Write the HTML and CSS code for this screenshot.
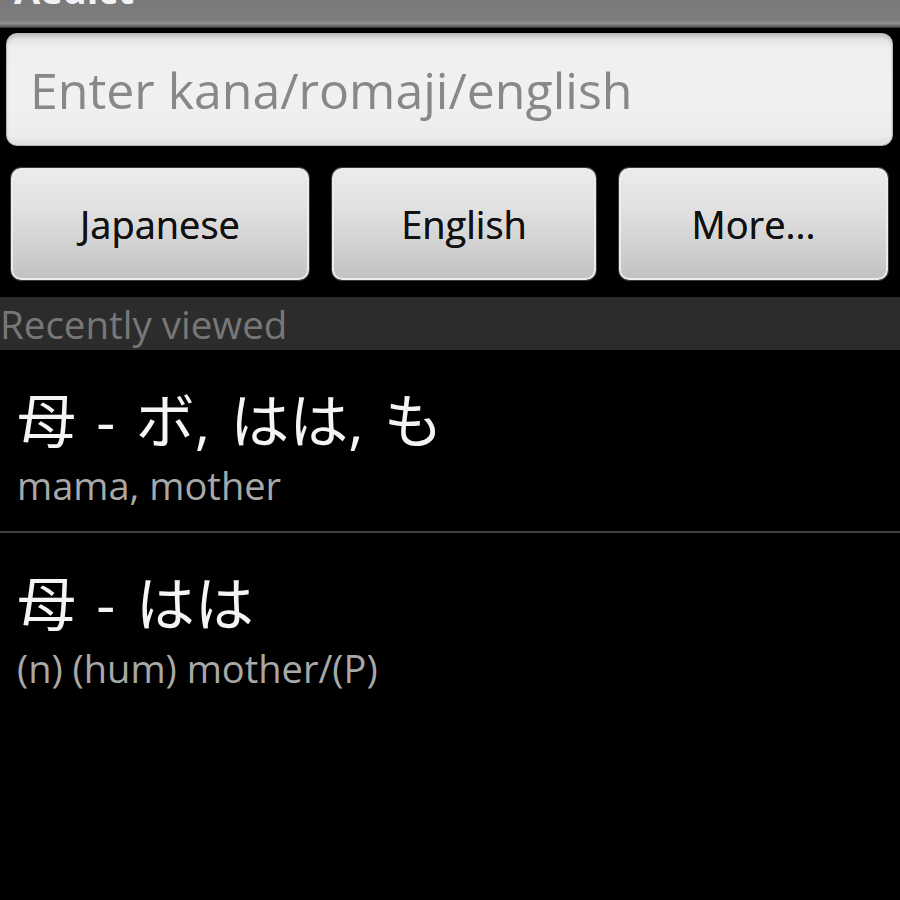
FILE: index.html
```html
<!DOCTYPE html>
<html lang="en">
<head>
<meta charset="utf-8">
<title>Aedict</title>
<link rel="stylesheet" href="styles.css">
</head>
<body>
<div class="screen">
  <header class="titlebar"><span class="title">Aedict</span></header>
  <div class="search-row">
    <input class="search" type="text" placeholder="Enter kana/romaji/english">
  </div>
  <div class="buttons">
    <button class="btn">Japanese</button>
    <button class="btn">English</button>
    <button class="btn">More...</button>
  </div>
  <div class="section">Recently viewed</div>
  <ul class="list">
    <li class="item">
      <div class="item-title">母 - ボ, はは, も</div>
      <div class="item-sub">mama, mother</div>
    </li>
    <li class="item">
      <div class="item-title">母 - はは</div>
      <div class="item-sub">(n) (hum) mother/(P)</div>
    </li>
  </ul>
</div>
</body>
</html>
```

FILE: styles.css
```css
html, body {
  margin: 0;
  padding: 0;
  background: #000;
}

.screen {
  width: 900px;
  height: 900px;
  overflow: hidden;
  background: #000;
  font-family: "Open Sans", "Noto Sans CJK JP", sans-serif;
}

.titlebar {
  height: 28px;
  overflow: hidden;
  background: linear-gradient(#7a7a7a 0%, #7d7d7d 72%, #8d8d8d 84%, #6a6a6a 93%, #2a2a2a 100%);
  padding-left: 14px;
}

.title {
  display: block;
  margin-top: -30px;
  font-size: 38px;
  line-height: 38px;
  font-weight: 700;
  color: #f2f2f2;
}

.search-row {
  padding: 5px 7px 0 6px;
}

.search {
  display: block;
  box-sizing: border-box;
  width: 100%;
  height: 113px;
  margin: 0;
  padding: 0 0 0 23px;
  border: 1px solid #b8b8b8;
  border-radius: 11px;
  background: linear-gradient(#dedede 0%, #efefef 12%, #f1f1f1 60%, #ececec 92%, #dcdcdc 100%);
  box-shadow: inset 0 3px 3px rgba(0, 0, 0, 0.12);
  font-family: "Open Sans", sans-serif;
  font-size: 50px;
  color: #333;
  outline: none;
}

.search::placeholder {
  color: #888;
}

.buttons {
  display: grid;
  grid-template-columns: 298px 264px 269px;
  column-gap: 23px;
  padding: 22px 0 0 11px;
}

.btn {
  box-sizing: border-box;
  height: 112px;
  margin: 0;
  padding: 0;
  border: 2px solid #ececec;
  border-radius: 10px;
  background: linear-gradient(#ececec 0%, #e1e1e1 35%, #cfcfcf 75%, #c2c2c2 100%);
  box-shadow: 0 0 0 1px #3a3a3a;
  font-family: "Open Sans", sans-serif;
  font-size: 38px;
  color: #111;
  text-shadow: 0 0 0.6px #111;
}

.section {
  margin-top: 17px;
  height: 53px;
  box-sizing: border-box;
  padding: 2px 0 0 0;
  background: #2c2c2c;
  font-size: 38.5px;
  line-height: 51px;
  color: #777;
}

.list {
  list-style: none;
  margin: 0;
  padding: 0;
}

.item {
  padding: 38px 0 22px 17px;
  border-bottom: 2px solid #404040;
}

.item:last-child {
  border-bottom: none;
}

.item-title {
  font-family: "Open Sans", "Noto Sans CJK JP", sans-serif;
  font-size: 59px;
  line-height: 64px;
  word-spacing: 5px;
  color: #f4f4f4;
}

.item-sub {
  margin-top: 9px;
  font-size: 38px;
  line-height: 48px;
  color: #a8a8a8;
}
```
